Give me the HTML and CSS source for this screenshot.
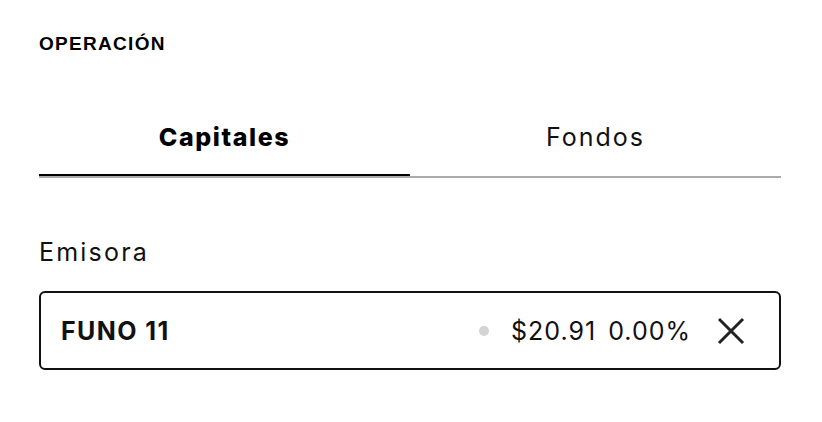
FILE: index.html
```html
<!DOCTYPE html>
<html lang="es">
<head>
<meta charset="utf-8">
<title>Operación</title>
<link rel="stylesheet" href="styles.css">
</head>
<body>
<main class="panel">
  <h1 class="title">OPERACIÓN</h1>
  <nav class="tabs">
    <div class="tab tab-active">Capitales</div>
    <div class="tab">Fondos</div>
  </nav>
  <label class="field-label">Emisora</label>
  <div class="select-box">
    <span class="ticker">FUNO 11</span>
    <span class="status-dot"></span>
    <span class="price">$20.91</span>
    <span class="change">0.00%</span>
    <svg class="clear-icon" width="28" height="28" viewBox="0 0 28 28" aria-hidden="true">
      <path d="M2 2 L26 26 M26 2 L2 26" stroke="#222" stroke-width="3" fill="none"/>
    </svg>
  </div>
</main>
</body>
</html>
```
FILE: styles.css
```css
* { box-sizing: border-box; }
html, body { margin: 0; padding: 0; background: #fff; }
body {
  font-family: Inter, "Noto Sans", sans-serif;
  color: #111;
}
.panel {
  width: 742px;
  margin-left: 39px;
  padding-top: 32px;
}
.title {
  margin: 0;
  font-family: "Liberation Sans", Arial, sans-serif;
  font-weight: 700;
  font-size: 19px;
  line-height: 24px;
  letter-spacing: 1.3px;
  color: #000;
}
.tabs {
  display: flex;
  margin-top: 66px;
  border-bottom: 2px solid #aaa;
}
.tab {
  flex: 1;
  text-align: center;
  font-size: 25px;
  line-height: 30px;
  letter-spacing: 2px;
  padding-bottom: 22px;
  border-bottom: 2px solid transparent;
  color: #111;
}
.tab-active {
  font-weight: 800;
  letter-spacing: 1.6px;
  border-bottom-color: #000;
  color: #000;
}
.field-label {
  display: block;
  margin-top: 59px;
  font-size: 25px;
  line-height: 30px;
  letter-spacing: 2.2px;
}
.select-box {
  margin-top: 24px;
  height: 79px;
  border: 2px solid #111;
  border-radius: 6px;
  display: flex;
  align-items: center;
  padding: 0 34px 0 20px;
}
.ticker {
  font-weight: 700;
  font-size: 25px;
  letter-spacing: 1.4px;
  flex: 1;
}
.status-dot {
  width: 10px;
  height: 10px;
  border-radius: 50%;
  background: #d4d4d4;
  margin-right: 22px;
}
.price, .change {
  font-size: 25px;
  letter-spacing: 1px;
}
.change { margin-left: 12px; }
.clear-icon {
  margin-left: 26px;
  display: block;
}
```
